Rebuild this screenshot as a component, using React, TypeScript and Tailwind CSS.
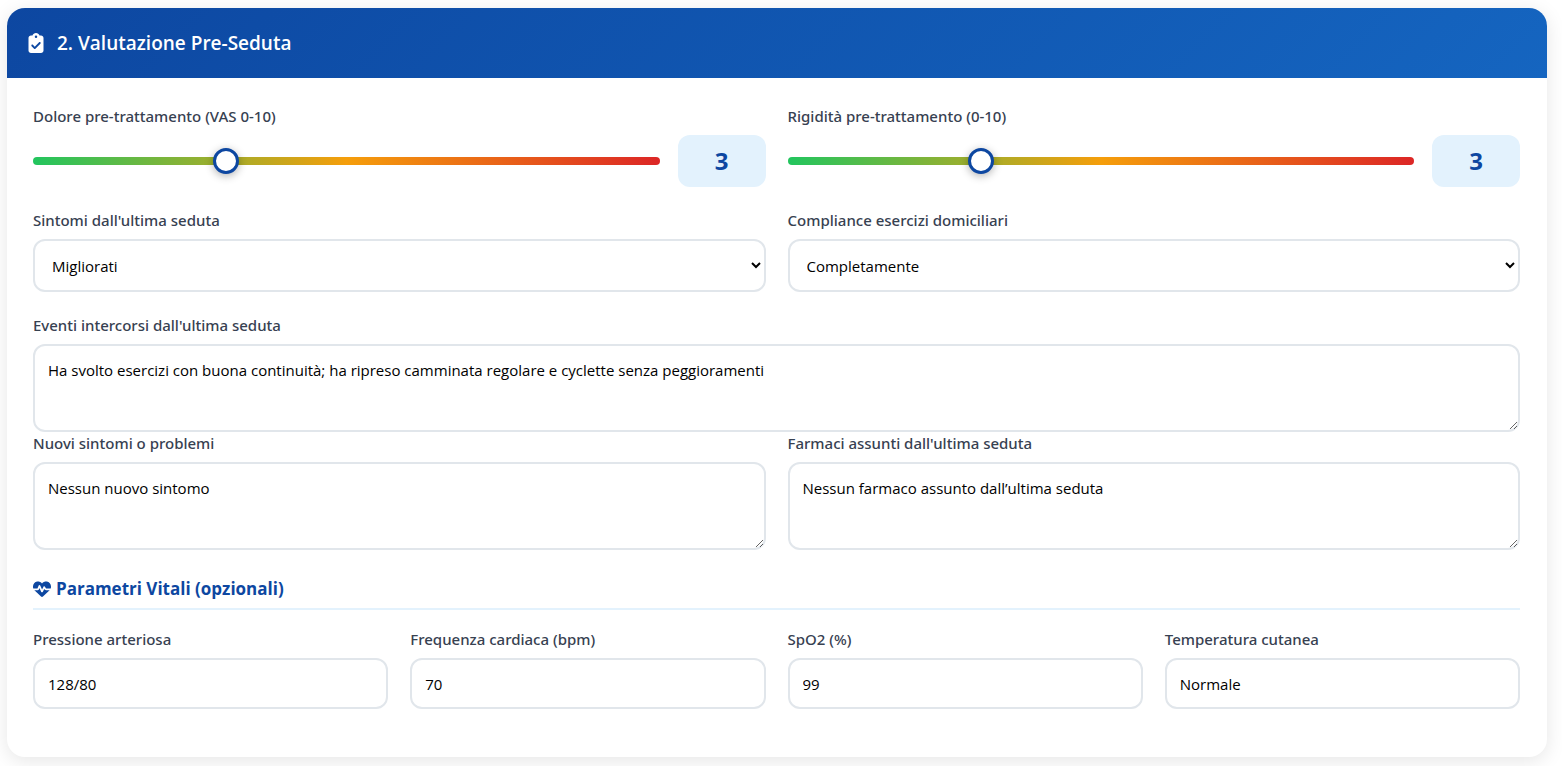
import { useState } from 'react'
import type { ReactNode } from 'react'
import { FaClipboardCheck, FaHeartPulse } from 'react-icons/fa6'

const fieldClass =
  'block w-full rounded-xl border-2 border-[#e1e6eb] bg-white px-[13px] text-[15px] leading-5 text-black outline-none focus:border-[#0d47a1]'

type FieldProps = {
  id: string
  label: string
  children: ReactNode
}

function Field({ id, label, children }: FieldProps) {
  return (
    <div className="min-w-0">
      <label
        htmlFor={id}
        className="mb-2 block font-['Noto_Sans',sans-serif] text-[15px] leading-[22px] font-medium text-[#374151]"
      >
        {label}
      </label>
      {children}
    </div>
  )
}

function SliderField({ id, label, initial }: { id: string; label: string; initial: number }) {
  const [value, setValue] = useState<number>(initial)

  return (
    <Field id={id} label={label}>
      <div className="flex items-center gap-[18px]">
        <input
          id={id}
          type="range"
          min={0}
          max={10}
          value={value}
          onChange={(e) => setValue(Number(e.target.value))}
          className="h-2 min-w-0 flex-1 cursor-pointer appearance-none rounded-full bg-[linear-gradient(90deg,#22c55e,#f59e0b_50%,#dc2626)] outline-none [&::-webkit-slider-thumb]:size-[26px] [&::-webkit-slider-thumb]:appearance-none [&::-webkit-slider-thumb]:rounded-full [&::-webkit-slider-thumb]:border-3 [&::-webkit-slider-thumb]:border-solid [&::-webkit-slider-thumb]:border-[#0d47a1] [&::-webkit-slider-thumb]:bg-white [&::-webkit-slider-thumb]:shadow-[0_2px_8px_rgba(0,0,0,0.3)]"
        />
        <output
          htmlFor={id}
          className="flex h-[52px] w-[88px] items-center justify-center rounded-xl bg-[#e3f2fd] text-2xl font-bold text-[#0d47a1]"
        >
          {value}
        </output>
      </div>
    </Field>
  )
}

function SelectField({ id, label, options }: { id: string; label: string; options: string[] }) {
  return (
    <Field id={id} label={label}>
      <select id={id} className={`${fieldClass} h-[53px]`}>
        {options.map((option) => (
          <option key={option}>{option}</option>
        ))}
      </select>
    </Field>
  )
}

function TextAreaField({ id, label, text }: { id: string; label: string; text: string }) {
  return (
    <Field id={id} label={label}>
      <textarea id={id} defaultValue={text} className={`${fieldClass} h-[88px] resize-y py-[14px]`} />
    </Field>
  )
}

function TextField({ id, label, text }: { id: string; label: string; text: string }) {
  return (
    <Field id={id} label={label}>
      <input id={id} type="text" defaultValue={text} className={`${fieldClass} h-[51px]`} />
    </Field>
  )
}

export default function App() {
  return (
    <main className="bg-white pt-2 pr-[15px] pb-[9px] pl-[7px] font-['Open_Sans','Noto_Sans',sans-serif]">
      <section className="overflow-hidden rounded-[18px] bg-white shadow-[0_4px_20px_rgba(0,0,0,0.1)]">
        <header className="flex h-[70px] items-center gap-3 bg-linear-135 from-[#0d47a1] to-[#1565c0] px-5 text-white">
          <FaClipboardCheck className="h-5 w-[18px]" />
          <h2 className="text-[19px] leading-7 font-semibold">2. Valutazione Pre-Seduta</h2>
        </header>

        <form className="pt-[27px] pr-[27px] pb-12 pl-[26px]">
          <div className="grid grid-cols-2 gap-[22px]">
            <SliderField id="dolore" label="Dolore pre-trattamento (VAS 0-10)" initial={3} />
            <SliderField id="rigidita" label="Rigidità pre-trattamento (0-10)" initial={3} />
            <SelectField
              id="sintomi"
              label="Sintomi dall'ultima seduta"
              options={['Migliorati', 'Invariati', 'Peggiorati']}
            />
            <SelectField
              id="compliance"
              label="Compliance esercizi domiciliari"
              options={['Completamente', 'Parzialmente', 'Non eseguiti']}
            />
          </div>

          <div className="mt-[22px]">
            <TextAreaField
              id="eventi"
              label="Eventi intercorsi dall'ultima seduta"
              text="Ha svolto esercizi con buona continuità; ha ripreso camminata regolare e cyclette senza peggioramenti"
            />
          </div>
          <div className="grid grid-cols-2 gap-[22px]">
            <TextAreaField id="nuovi" label="Nuovi sintomi o problemi" text="Nessun nuovo sintomo" />
            <TextAreaField
              id="farmaci"
              label="Farmaci assunti dall'ultima seduta"
              text="Nessun farmaco assunto dall’ultima seduta"
            />
          </div>

          <h3 className="mt-[26px] mb-[18px] flex items-center gap-[5px] border-b-2 border-[#e3f2fd] pb-1.5 text-[17px] leading-[26px] font-bold text-[#0d47a1]">
            <FaHeartPulse className="size-[18px]" />
            Parametri Vitali (opzionali)
          </h3>
          <div className="grid grid-cols-4 gap-[22px]">
            <TextField id="pressione" label="Pressione arteriosa" text="128/80" />
            <TextField id="frequenza" label="Frequenza cardiaca (bpm)" text="70" />
            <TextField id="spo2" label="SpO2 (%)" text="99" />
            <TextField id="temperatura" label="Temperatura cutanea" text="Normale" />
          </div>
        </form>
      </section>
    </main>
  )
}
